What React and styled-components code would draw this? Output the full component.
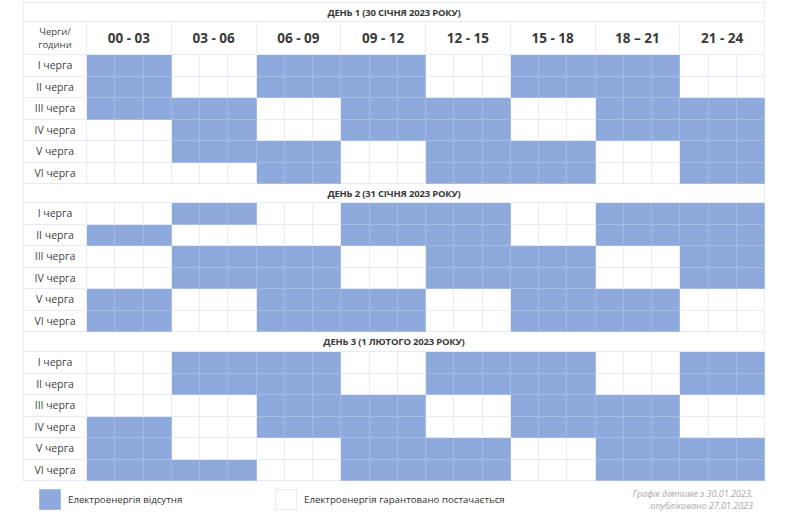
import React from 'react';
import styled, { createGlobalStyle } from 'styled-components';

const GlobalStyle = createGlobalStyle`
  body {
    margin: 0;
    background: #ffffff;
    font-family: "Open Sans", "Noto Sans", sans-serif;
  }
`;

const BLUE = '#8eaadc';
const LINE = '#e6ebf5';
const BLUE_LINE = '#a5bbe5';

const SLOTS = ['00 - 03', '03 - 06', '06 - 09', '09 - 12', '12 - 15', '15 - 18', '18 – 21', '21 - 24'];
const QUEUES = ['I черга', 'II черга', 'III черга', 'IV черга', 'V черга', 'VI черга'];

// 1 = no power, 0 = guaranteed supply (per 3-hour block)
const DAYS = [
  {
    title: 'ДЕНЬ 1 (30 СІЧНЯ 2023 РОКУ)',
    rows: [
      [1, 0, 1, 1, 0, 1, 1, 0],
      [1, 0, 1, 1, 0, 1, 1, 0],
      [1, 1, 0, 1, 1, 0, 1, 1],
      [0, 1, 0, 1, 1, 0, 1, 1],
      [0, 1, 1, 0, 1, 1, 0, 1],
      [0, 0, 1, 0, 1, 1, 0, 1],
    ],
  },
  {
    title: 'ДЕНЬ 2 (31 СІЧНЯ 2023 РОКУ)',
    rows: [
      [0, 1, 0, 1, 1, 0, 1, 1],
      [1, 0, 0, 1, 1, 0, 1, 1],
      [0, 1, 1, 0, 1, 1, 0, 1],
      [0, 1, 1, 0, 1, 1, 0, 1],
      [1, 0, 1, 1, 0, 1, 1, 0],
      [1, 0, 1, 1, 0, 1, 1, 0],
    ],
  },
  {
    title: 'ДЕНЬ 3 (1 ЛЮТОГО 2023 РОКУ)',
    rows: [
      [0, 1, 1, 0, 1, 1, 0, 1],
      [0, 1, 1, 0, 1, 1, 0, 1],
      [0, 0, 1, 1, 0, 1, 1, 0],
      [1, 0, 1, 1, 0, 1, 1, 0],
      [1, 0, 0, 1, 1, 0, 1, 1],
      [1, 1, 0, 1, 1, 0, 1, 1],
    ],
  },
];

const Page = styled.div`
  padding: 2px 0 0 23px;
  width: 742px;
`;

const Grid = styled.div`
  display: grid;
  grid-template-columns: 63px repeat(24, 1fr);
  width: 742px;
  border-top: 1px solid ${LINE};
  border-left: 1px solid ${LINE};
  box-sizing: border-box;
`;

const TitleCell = styled.div`
  grid-column: 1 / -1;
  height: ${p => p.$h}px;
  display: flex;
  align-items: center;
  justify-content: center;
  border-right: 1px solid ${LINE};
  border-bottom: 1px solid ${LINE};
  box-sizing: border-box;
  font-size: 9.5px;
  font-weight: 700;
  letter-spacing: -0.2px;
  color: #3b3b3b;
`;

const CornerCell = styled.div`
  height: 33px;
  display: flex;
  align-items: center;
  justify-content: center;
  text-align: center;
  border-right: 1px solid ${LINE};
  border-bottom: 1px solid ${LINE};
  box-sizing: border-box;
  font-size: 9.5px;
  line-height: 13px;
  color: #444444;
`;

const SlotHead = styled.div`
  grid-column: span 3;
  height: 33px;
  display: flex;
  align-items: center;
  justify-content: center;
  border-right: 1px solid ${LINE};
  border-bottom: 1px solid ${LINE};
  box-sizing: border-box;
  font-size: 13.5px;
  font-weight: 700;
  color: #3a3a3a;
`;

const QueueLabel = styled.div`
  height: 21.5px;
  display: flex;
  align-items: center;
  justify-content: center;
  border-right: 1px solid ${LINE};
  border-bottom: 1px solid ${LINE};
  box-sizing: border-box;
  font-size: 10.5px;
  color: #404040;
  white-space: nowrap;
`;

const Slot = styled.div`
  height: 21.5px;
  background: ${p => (p.$off ? BLUE : '#ffffff')};
  border-right: 1px solid ${p => (p.$off ? BLUE_LINE : LINE)};
  border-bottom: 1px solid ${p => (p.$off ? BLUE_LINE : LINE)};
  box-sizing: border-box;
`;

const Legend = styled.div`
  display: grid;
  grid-template-columns: 236px auto 1fr;
  align-items: center;
  padding: 7px 12px 0 16px;
`;

const LegendItem = styled.div`
  display: flex;
  align-items: center;
  gap: 7px;
  font-size: 9.7px;
  color: #333333;
`;

const Swatch = styled.span`
  width: 22px;
  height: 21px;
  box-sizing: border-box;
  background: ${p => (p.$off ? BLUE : '#ffffff')};
  border: 1px solid ${p => (p.$off ? BLUE_LINE : LINE)};
`;

const Note = styled.div`
  text-align: right;
  font-size: 9px;
  line-height: 11.5px;
  font-style: italic;
  color: #a8a8a8;
`;

function DayBlock({ day, index }) {
  return (
    <>
      <TitleCell $h={index === 2 ? 20 : 19}>{day.title}</TitleCell>
      {index === 0 && (
        <>
          <CornerCell>Черги/<br />години</CornerCell>
          {SLOTS.map(s => <SlotHead key={s}>{s}</SlotHead>)}
        </>
      )}
      {day.rows.map((row, r) => (
        <React.Fragment key={r}>
          <QueueLabel>{QUEUES[r]}</QueueLabel>
          {row.flatMap((v, b) => [0, 1, 2].map(k => <Slot key={`${b}-${k}`} $off={v === 1} />))}
        </React.Fragment>
      ))}
    </>
  );
}

export default function App() {
  return (
    <>
      <GlobalStyle />
      <Page>
        <Grid>
          {DAYS.map((d, i) => <DayBlock key={d.title} day={d} index={i} />)}
        </Grid>
        <Legend>
          <LegendItem><Swatch $off />Електроенергія відсутня</LegendItem>
          <LegendItem><Swatch />Електроенергія гарантовано постачається</LegendItem>
          <Note>Графік діятиме з 30.01.2023,<br />опубліковано 27.01.2023</Note>
        </Legend>
      </Page>
    </>
  );
}
